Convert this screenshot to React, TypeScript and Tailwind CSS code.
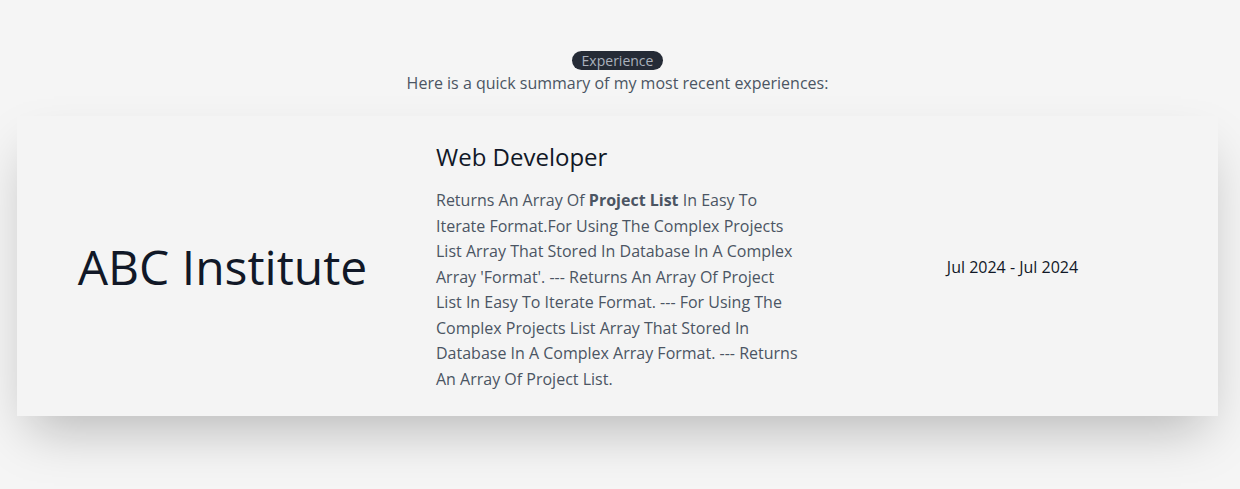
const Experience = () => {
  return (
    <div className="min-h-screen bg-[#f5f5f5] pt-[51px] pb-16 font-['Open_Sans',sans-serif]">
      <div className="ml-[17px] w-[1201px]">
        {/* Heading */}
        <div className="flex flex-col items-center">
          <span className="rounded-full bg-[#252b36] px-2.5 text-sm leading-[19px] text-[#aab1bd]">
            Experience
          </span>
          <p className="mt-px text-base leading-6 text-[#4b5563]">
            Here is a quick summary of my most recent experiences:
          </p>
        </div>

        {/* Card */}
        <div className="mt-[21px] grid grid-cols-3 gap-8 bg-[#f4f4f4] px-6 pt-[25px] pb-6 shadow-2xl">
          <div className="flex items-center justify-center">
            <h2 className="text-5xl text-[#111827]">ABC Institute</h2>
          </div>

          <div>
            <h3 className="mb-[15px] text-2xl leading-8 text-[#111827]">Web Developer</h3>
            <p className="text-base leading-[25.5px] text-[#4b5563]">
              Returns An Array Of <span className="font-bold">Project List</span> In Easy To Iterate
              Format.For Using The Complex Projects List Array That Stored In Database In A Complex
              Array 'Format'. --- Returns An Array Of Project List In Easy To Iterate Format. --- For
              Using The Complex Projects List Array That Stored In Database In A Complex Array
              Format. --- Returns An Array Of Project List.
            </p>
          </div>

          <div className="flex items-center justify-center">
            <p className="text-base text-[#111827]">Jul 2024 - Jul 2024</p>
          </div>
        </div>
      </div>
    </div>
  );
};

export default function App() {
  return <Experience />;
}
